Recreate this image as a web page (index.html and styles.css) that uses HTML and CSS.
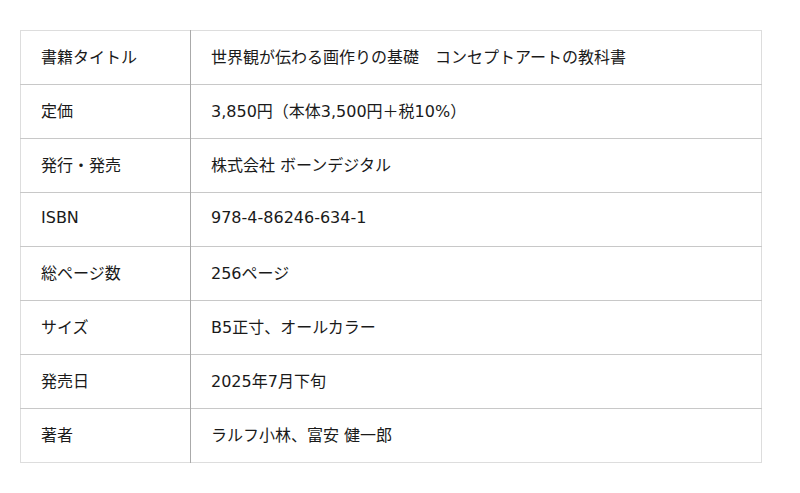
FILE: index.html
```html
<!DOCTYPE html>
<html lang="ja">
<head>
<meta charset="utf-8">
<link rel="stylesheet" href="styles.css">
</head>
<body>
<table class="spec">
  <tr><th>書籍タイトル</th><td>世界観が伝わる画作りの基礎　コンセプトアートの教科書</td></tr>
  <tr><th>定価</th><td>3,850円（本体3,500円＋税10%）</td></tr>
  <tr><th>発行・発売</th><td>株式会社 ボーンデジタル</td></tr>
  <tr><th>ISBN</th><td>978-4-86246-634-1</td></tr>
  <tr><th>総ページ数</th><td>256ページ</td></tr>
  <tr><th>サイズ</th><td>B5正寸、オールカラー</td></tr>
  <tr><th>発売日</th><td>2025年7月下旬</td></tr>
  <tr><th>著者</th><td>ラルフ小林、富安 健一郎</td></tr>
</table>
</body>
</html>
```
FILE: styles.css
```css
html, body {
  margin: 0;
  padding: 0;
  background: #fff;
}
body {
  padding: 30px 20px;
  font-family: "DejaVu Sans", "Noto Sans CJK JP", sans-serif;
  font-size: 16px;
  color: #1a1a1a;
}
.spec {
  width: 742px;
  border-collapse: collapse;
  border: 1px solid #ddd;
}
.spec th, .spec td {
  height: 49px;
  padding: 0 0 4px 20px;
  text-align: left;
  font-weight: normal;
  vertical-align: middle;
  border-top: 1px solid #c8c8c8;
}
.spec tr:first-child th, .spec tr:first-child td {
  border-top: 1px solid #ddd;
}
.spec th {
  width: 149px;
  border-right: 1px solid #aaa;
}
```
